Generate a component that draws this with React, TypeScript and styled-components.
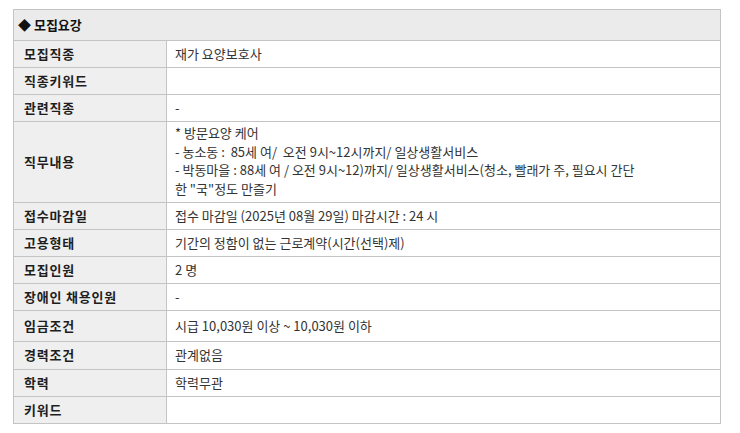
import styled, { createGlobalStyle } from 'styled-components';

const GlobalStyle = createGlobalStyle`
    body {
        margin: 0;
        background: #fff;
        font-family: 'Noto Sans CJK KR', 'Noto Sans', sans-serif;
    }
`;

const Wrapper = styled.div`
    padding: 9px 0 0 13px;
`;
const Table = styled.table`
    width: 708px;
    border-collapse: collapse;
    table-layout: fixed;
    border: 1px solid #c4c4c4;
`;
const LabelCol = styled.col`
    width: 153px;
`;
const Row = styled.tr<{ $h: number }>`
    height: ${({ $h }) => $h}px;
`;
const HeaderCell = styled.th`
    background: #ebebeb;
    border: 1px solid #c4c4c4;
    padding: 0 0 1px 4px;
    text-align: left;
    font-size: 13px;
    font-weight: bold;
    color: #111;
`;
const LabelCell = styled.th`
    background: #efefef;
    border: 1px solid #c4c4c4;
    padding: 0 0 2px 10px;
    text-align: left;
    font-size: 13px;
    font-weight: bold;
    letter-spacing: 0.8px;
    color: #1e1e1e;
    white-space: nowrap;
`;
const ValueCell = styled.td`
    background: #fff;
    border: 1px solid #c4c4c4;
    padding: 0 8px 2px;
    font-size: 13px;
    color: #333;
    white-space: pre;
`;
const Line = styled.div`
    line-height: 18.5px;
`;

type Item = { label: string; value?: React.ReactNode; height?: number };

const items: Item[] = [
    { label: '모집직종', value: '재가 요양보호사' },
    { label: '직종키워드' },
    { label: '관련직종', value: '-' },
    {
        label: '직무내용',
        height: 81,
        value: (
            <>
                <Line>* 방문요양 케어</Line>
                <Line>- 농소동 :  85세 여/  오전 9시~12시까지/ 일상생활서비스</Line>
                <Line>- 박동마을 : 88세 여 / 오전 9시~12)까지/ 일상생활서비스(청소, 빨래가 주, 필요시 간단</Line>
                <Line>한 "국"정도 만즐기</Line>
            </>
        ),
    },
    { label: '접수마감일', value: '접수 마감일 (2025년 08월 29일) 마감시간 : 24 시' },
    { label: '고용형태', value: '기간의 정함이 없는 근로계약(시간(선택)제)' },
    { label: '모집인원', value: '2 명' },
    { label: '장애인 채용인원', value: '-' },
    { label: '임금조건', value: '시급 10,030원 이상 ~ 10,030원 이하', height: 31 },
    { label: '경력조건', value: '관계없음', height: 28 },
    { label: '학력', value: '학력무관' },
    { label: '키워드' },
];

const App = () => {
    return (
        <Wrapper>
            <GlobalStyle />
            <Table>
                <colgroup>
                    <LabelCol />
                    <col />
                </colgroup>
                <tbody>
                    <Row $h={31}>
                        <HeaderCell colSpan={2}>◆ 모집요강</HeaderCell>
                    </Row>
                    {items.map((item) => (
                        <Row key={item.label} $h={item.height ?? 27}>
                            <LabelCell>{item.label}</LabelCell>
                            <ValueCell>{item.value}</ValueCell>
                        </Row>
                    ))}
                </tbody>
            </Table>
        </Wrapper>
    );
};

export default App;
